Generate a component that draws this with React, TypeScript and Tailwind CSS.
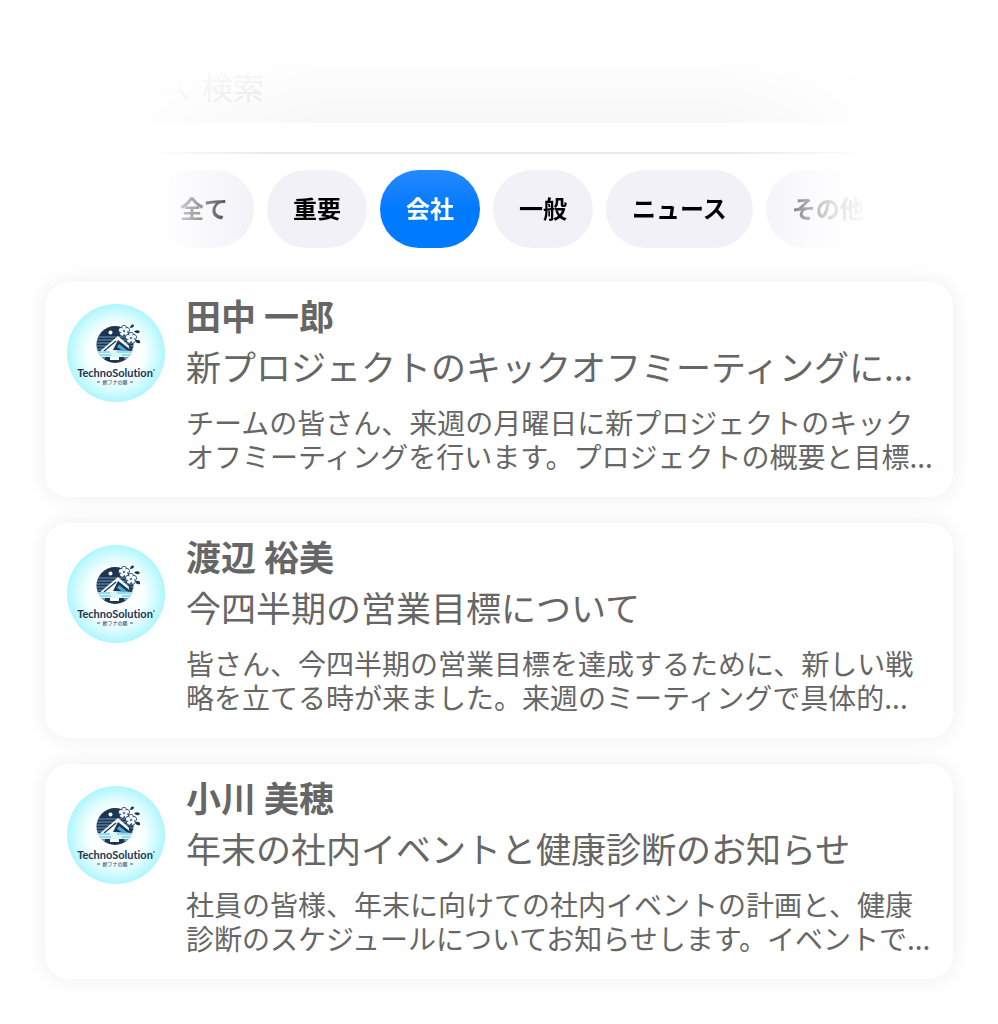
import { clsx } from "clsx"

const categories = ["全て", "重要", "会社", "一般", "ニュース", "その他"]

const messages = [
  {
    name: "田中 一郎",
    title: "新プロジェクトのキックオフミーティングに...",
    body: "チームの皆さん、来週の月曜日に新プロジェクトのキック\nオフミーティングを行います。プロジェクトの概要と目標...",
  },
  {
    name: "渡辺 裕美",
    title: "今四半期の営業目標について",
    body: "皆さん、今四半期の営業目標を達成するために、新しい戦\n略を立てる時が来ました。来週のミーティングで具体的...",
  },
  {
    name: "小川 美穂",
    title: "年末の社内イベントと健康診断のお知らせ",
    body: "社員の皆様、年末に向けての社内イベントの計画と、健康\n診断のスケジュールについてお知らせします。イベントで...",
  },
]

function Flower({ x, y, r }: { x: number; y: number; r: number }) {
  return (
    <g transform={`translate(${x} ${y}) scale(${r})`} stroke="#1b3552" strokeWidth="0.13" fill="#f2fbff">
      {[0, 72, 144, 216, 288].map((angle) => (
        <ellipse key={angle} cx="0" cy="-0.55" rx="0.42" ry="0.4" transform={`rotate(${angle})`} />
      ))}
      <circle r="0.5" stroke="none" />
      <circle r="0.14" />
    </g>
  )
}

function Logo() {
  return (
    <svg viewBox="0 0 98 98" className="size-[98px] shrink-0" role="img" aria-label="TechnoSolution">
      <defs>
        <radialGradient id="glow">
          <stop offset="0" stopColor="#ffffff" />
          <stop offset="0.55" stopColor="#fbffff" />
          <stop offset="0.8" stopColor="#d3fbff" />
          <stop offset="1" stopColor="#aef6fe" />
        </radialGradient>
        <clipPath id="disc">
          <circle cx="48" cy="40.500" r="18.500" />
        </clipPath>
      </defs>
      <circle cx="49" cy="49" r="49" fill="url(#glow)" />
      <g clipPath="url(#disc)">
        <rect x="29" y="21" width="38" height="39" fill="#1b3552" />
        <path d="M29 33h38M29 36h38M29 39h38M29 42h38M29 45h38" stroke="#7ba9c2" strokeWidth="0.9" />
        <path d="M31 49 51 32 70 49Z" fill="#f4fcff" />
        <path d="M46 46 51 36 65 47Z" fill="#1b3552" />
        <path d="M37 47 49 37" stroke="#1b3552" strokeWidth="1.200" />
        <path d="M52 40 61 47H56L50 43Z" fill="#4aa9cf" />
        <rect x="29" y="47" width="38" height="6" fill="#d8f7fd" />
        <path d="M29 48h14M50 48h18M32 51h12M55 51h12" stroke="#56bddd" strokeWidth="1.200" />
        <path d="M43 53h9v3h-9Z" fill="#ffffff" />
        <path d="M29 54h9M57 54h12" stroke="#d8f7fd" strokeWidth="1" />
        <circle cx="43.500" cy="28.500" r="2" fill="#ffffff" />
      </g>
      <path d="M67 27q5-2 6 1-3 3-6-1ZM68 36q6-1 5 3-4 1-5-3ZM62 41q4 2 3 6-4-2-3-6ZM63 24q1-5 4-3 0 3-4 3Z" fill="#1b3552" />
      <Flower x={57} y={27} r={6} />
      <Flower x={64} y={34} r={6} />
      <text
        x="48"
        y="73"
        textAnchor="middle"
        fontFamily="Lato, sans-serif"
        fontSize="11"
        fontWeight="700"
        fill="#1b3552"
        className="[font-variant-ligatures:none]"
      >
        TechnoSolution
      </text>
      <circle cx="87" cy="66" r="0.8" fill="#1b3552" />
      <text x="48" y="80" textAnchor="middle" fontFamily="Noto Sans CJK JP, sans-serif" fontSize="5" fontWeight="500" fill="#3b5671">
        新フナの藤
      </text>
      <path d="M30 78h3M63 78h3" stroke="#3b5671" strokeWidth="1" />
    </svg>
  )
}

function SearchBar() {
  return (
    <form className="mr-3 flex h-[70px] items-center rounded-2xl bg-[#f7f7f7] pb-1 pl-4 [mask-composite:intersect] [mask-image:linear-gradient(to_bottom,transparent,black),linear-gradient(to_right,rgb(0_0_0/0.15),black_25%,black_80%,rgb(0_0_0/0.15))]">
      <svg viewBox="0 0 30 30" className="size-[30px] shrink-0" fill="none" strokeWidth="3" strokeLinecap="round" aria-hidden="true">
        <circle cx="12" cy="12" r="9" stroke="#f1f1f1" />
        <path d="m19 19 8 8" stroke="#d8d8d8" />
      </svg>
      <input
        type="search"
        aria-label="検索"
        placeholder="検索"
        className="ml-3 w-full min-w-0 bg-transparent text-[31px] text-gray-600 outline-none placeholder:text-[#d2d2d2]"
      />
    </form>
  )
}

function CategoryTabs() {
  return (
    <nav className="mt-4 flex gap-[13px] overflow-hidden pl-[10px] [mask-image:linear-gradient(to_right,transparent_2%,rgb(0_0_0/0.35)_7%,black_16%,black_83%,rgb(0_0_0/0.35)_91%,rgb(0_0_0/0.12)_95%,transparent)]">
      {categories.map((category) => (
        <button
          key={category}
          type="button"
          className={clsx(
            "h-[78px] shrink-0 rounded-full px-[26px] pb-[2px] text-2xl font-bold whitespace-nowrap",
            category === "会社"
              ? "bg-linear-to-b from-[#2389ff] to-[#007aff] to-50% text-white"
              : "bg-[#f2f1f8] text-black"
          )}
        >
          {category}
        </button>
      ))}
    </nav>
  )
}

export default function App() {
  return (
    <div lang="ja" className="min-h-screen overflow-hidden bg-white pt-[53px] pb-11 font-['Noto_Sans_CJK_JP',sans-serif]">
      <header className="mr-32 ml-36">
        <SearchBar />
        <div className="mt-[29px] h-[2px] bg-[#e8e8e9] [mask-image:linear-gradient(to_right,transparent,black_18%,black_80%,transparent)]" />
        <CategoryTabs />
      </header>

      <main className="mt-[34px] flex flex-col gap-[26px] px-[45px]">
        {messages.map((message) => (
          <article
            key={message.name}
            className="flex gap-[21px] rounded-3xl bg-white pt-[7px] pr-3 pb-6 pl-[22px] text-[#666666] shadow-[0_0_22px_rgba(0,0,0,0.07)]"
          >
            <div className="mt-[15px]">
              <Logo />
            </div>
            <div className="min-w-0 flex-1">
              <h2 className="truncate text-[35px] leading-[52px] font-bold">{message.name}</h2>
              <h3 className="text-[35px] leading-[50px] whitespace-nowrap">{message.title}</h3>
              <p className="mt-[14px] text-[28px] leading-[34px] whitespace-pre">{message.body}</p>
            </div>
          </article>
        ))}
      </main>
    </div>
  )
}
